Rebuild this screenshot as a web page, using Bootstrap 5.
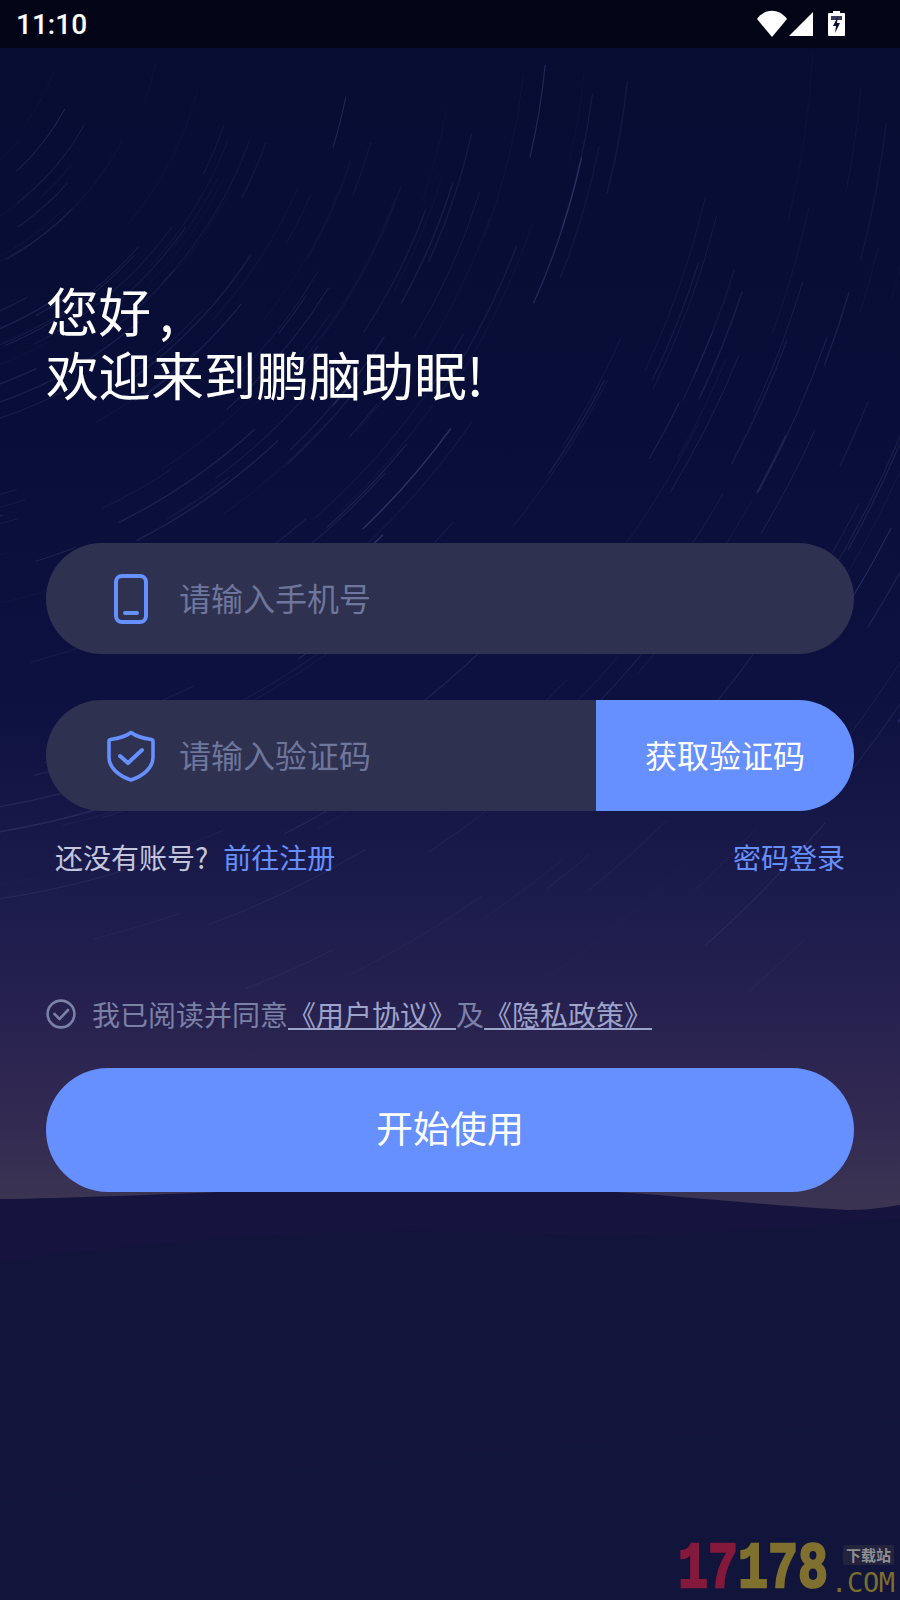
<!DOCTYPE html>
<html lang="zh-CN">
<head>
    <meta charset="UTF-8">
    <title>鹏脑助眠</title>
    <link href="https://cdn.jsdelivr.net/npm/bootstrap@5.3.2/dist/css/bootstrap.min.css" rel="stylesheet">
    <style>
        html, body { height: 1600px; overflow: hidden; }
        body {
            font-family: "Noto Sans CJK SC", "Noto Sans", sans-serif;
            color: #fff;
            background: linear-gradient(180deg, #070c32 0, #090e38 400px, #0d1140 700px, #1c1c4c 900px, #25204f 1000px, #342b52 1130px, #3b3552 1210px);
        }
        .scene { position: absolute; left: 0; top: 0; width: 900px; height: 1600px; }
        .page { position: relative; width: 900px; height: 1600px; }
        .status-bar { height: 48px; padding: 0 16px; background: rgba(0, 0, 0, .55); }
        .status-time { font-family: Roboto, sans-serif; font-size: 28px; font-weight: 500; line-height: 50px; }
        .status-icons { margin-right: 39px; }
        .battery-icon { margin-left: 14px; }
        .content { padding: 229px 46px 0; }
        .hello { font-size: 52.6px; line-height: 64px; font-weight: 400; margin-bottom: 138px; }
        .hello-comma { margin-left: 8px; }
        .pill-field { height: 111px; border-radius: 56px; background: #2e3150; overflow: hidden; }
        .pill-field + .pill-field { margin-top: 46px; }
        .field-icon { width: 133px; flex: none; padding-left: 36px; }
        .pill-field .form-control {
            background: transparent; border: 0; box-shadow: none; padding: 0 0 4px;
            font-size: 32px; color: #fff; border-radius: 0;
        }
        .pill-field .form-control::placeholder { color: #6e769c; opacity: 1; }
        .code-btn {
            width: 258px; flex: none; border: 0; border-radius: 0; padding-bottom: 10px;
            background: #668fff; color: #fff; font-size: 32px;
        }
        .code-btn:hover, .start-btn:hover { background: #668fff; color: #fff; }
        .link-row { font-size: 28px; line-height: 40px; margin-top: 26px; padding: 0 9px; color: #c3c6dc; }
        .link-row a { color: #668fff; text-decoration: none; }
        .signup-link { margin-left: 15px; }
        .agree-row { font-size: 28px; line-height: 40px; margin-top: 117px; color: #7a80a6; }
        .agree-row svg { margin-right: 16px; flex: none; }
        .agree-row a { color: #9ea3cb; text-decoration: underline; text-underline-offset: 2px; text-decoration-thickness: 2px; }
        .start-btn {
            display: block; width: 100%; height: 124px; margin-top: 34px; padding-bottom: 10px;
            border: 0; border-radius: 62px; background: #668fff; color: #fff; font-size: 37px;
        }
        .wm { position: absolute; left: 678px; top: 1540px; width: 222px; height: 60px; }
        .wm-num {
            position: absolute; left: 0; top: 7px; font-family: "Liberation Mono", monospace; font-weight: 700;
            font-size: 50px; line-height: 46px; white-space: nowrap; color: #80702f;
            -webkit-text-stroke: 2px #80702f;
            transform: scale(1, 1.3); transform-origin: 0 50%;
        }
        .wm-num span { color: #84193b; -webkit-text-stroke-color: #84193b; }
        .wm-tag {
            position: absolute; left: 165px; top: 5px; padding: 0 3px; font-size: 15px; line-height: 20px;
            font-weight: 700; color: #8f8f93; background: #23233d; border-radius: 2px;
        }
        .wm-com {
            position: absolute; left: 153px; top: 28px; font-family: "DejaVu Sans Mono", monospace;
            font-size: 27px; line-height: 30px; color: #7b6d2f; letter-spacing: -.3px;
        }
    </style>
</head>
<body>

<!-- Star trails and hills -->
<svg class="scene" id="sky" viewBox="0 0 900 1600" xmlns="http://www.w3.org/2000/svg">
    <g id="trails" fill="none" stroke-linecap="round"></g>
    <path d="M0 1199 C120 1198 300 1186 480 1186 C620 1188 760 1206 850 1210 C870 1210 885 1207 900 1205 V1600 H0 Z" fill="#16143e"/>
    <path d="M0 1262 C160 1240 320 1228 480 1232 C660 1240 800 1228 900 1218 V1600 H0 Z" fill="#12143c"/>
    <path d="M0 1500 C220 1470 520 1450 900 1420 V1600 H0 Z" fill="#11143b"/>
</svg>

<div class="page">
    <!-- Status bar -->
    <div class="status-bar d-flex justify-content-between align-items-start">
        <span class="status-time">11:10</span>
        <div class="status-icons d-flex align-items-start">
            <svg width="32" height="48" viewBox="0 0 32 48"><path d="M1 19 C9 8 23 8 31 19 L16 37 Z" fill="#fff"/></svg>
            <svg width="26" height="48" viewBox="0 0 26 48"><path d="M25 12 V36 H1 Z" fill="#fff"/></svg>
            <svg class="battery-icon" width="17" height="48" viewBox="0 0 17 48">
                <path d="M5 11 H12 V13 H16 Q17 13 17 14 V35 Q17 36 16 36 H1 Q0 36 0 35 V14 Q0 13 1 13 H5 Z" fill="#fff"/>
                <path d="M3 16 H14 V20 H3 Z" fill="#070b32" opacity=".8"/>
                <path d="M10 16 L5 26 H8 L7 33 L12 23 H9 Z" fill="#070b32"/>
            </svg>
        </div>
    </div>

    <div class="content">
        <h1 class="hello">您好<span class="hello-comma">,</span><br>欢迎来到鹏脑助眠!</h1>

        <!-- Phone field -->
        <div class="pill-field d-flex align-items-center">
            <div class="field-icon d-flex justify-content-center">
                <svg width="36" height="52" viewBox="0 0 36 52" fill="none" stroke="#668fff">
                    <rect x="3" y="3" width="30" height="46" rx="6" stroke-width="4"/>
                    <path d="M12 40 H24" stroke-width="4" stroke-linecap="round"/>
                </svg>
            </div>
            <input type="text" class="form-control" placeholder="请输入手机号">
        </div>

        <!-- Code field -->
        <div class="pill-field d-flex align-items-center">
            <div class="field-icon d-flex justify-content-center">
                <svg width="48" height="52" viewBox="0 0 48 52" fill="none" stroke="#668fff" stroke-width="3.6" stroke-linecap="round" stroke-linejoin="round">
                    <path d="M24 2.5 C30 7 37 8.5 44.5 9.5 Q46 9.7 46 11.5 V27 C46 38 36 46 24 50 C12 46 2 38 2 27 V11.5 Q2 9.7 3.5 9.5 C11 8.5 18 7 24 2.5 Z"/>
                    <path d="M13 26 L21 33 L35 20" stroke-width="4"/>
                </svg>
            </div>
            <input type="text" class="form-control" placeholder="请输入验证码">
            <button type="button" class="btn code-btn h-100">获取验证码</button>
        </div>

        <div class="link-row d-flex justify-content-between">
            <span>还没有账号?<a href="#" class="signup-link">前往注册</a></span>
            <a href="#">密码登录</a>
        </div>

        <!-- Agreement -->
        <div class="agree-row d-flex align-items-center">
            <svg width="30" height="30" viewBox="0 0 30 30" fill="none" stroke="#7a80a6" stroke-width="2.6" stroke-linecap="round" stroke-linejoin="round">
                <circle cx="15" cy="15" r="13.4"/>
                <path d="M8.5 15 L13.5 20 L22 11"/>
            </svg>
            <span>我已阅读并同意<a href="#">《用户协议》</a>及<a href="#">《隐私政策》</a></span>
        </div>

        <button type="button" class="btn start-btn">开始使用</button>
    </div>

    <!-- Watermark -->
    <div class="wm">
        <div class="wm-num"><span>17</span>178</div>
        <div class="wm-tag">下载站</div>
        <div class="wm-com">.COM</div>
    </div>
</div>

<script>
    // star trails: arcs round one far off centre, seeded so every render is the same
    let seed = 17178;
    function rnd() {
        seed = (seed * 16807) % 2147483647;
        return seed / 2147483647;
    }

    const cx = -140, cy = 0;
    const group = document.getElementById("trails");
    let html = "";
    for (let i = 0; i < 280; i++) {
        const r = 200 + rnd() * 1300;
        const start = rnd() * 1.35;
        const len = (40 + rnd() * 150) / r;
        const x1 = cx + r * Math.cos(start), y1 = cy + r * Math.sin(start);
        const x2 = cx + r * Math.cos(start + len), y2 = cy + r * Math.sin(start + len);
        if (y2 > 1020 || y1 < 50 || x2 > 900) continue;
        let op = rnd() < 0.08 ? 0.28 : 0.05 + rnd() * 0.12;
        if (y1 < 250) op *= 0.7;
        if (y1 > 850) op *= 0.6;
        const w = (0.8 + rnd() * 0.7).toFixed(1);
        html += `<path d="M${x1.toFixed(1)} ${y1.toFixed(1)} A${r.toFixed(1)} ${r.toFixed(1)} 0 0 1 ${x2.toFixed(1)} ${y2.toFixed(1)}" stroke="#8a8fd0" stroke-opacity="${op.toFixed(2)}" stroke-width="${w}"/>`;
    }
    group.innerHTML = html;
</script>

<script src="https://cdn.jsdelivr.net/npm/bootstrap@5.3.2/dist/js/bootstrap.bundle.min.js"></script>
</body>
</html>
